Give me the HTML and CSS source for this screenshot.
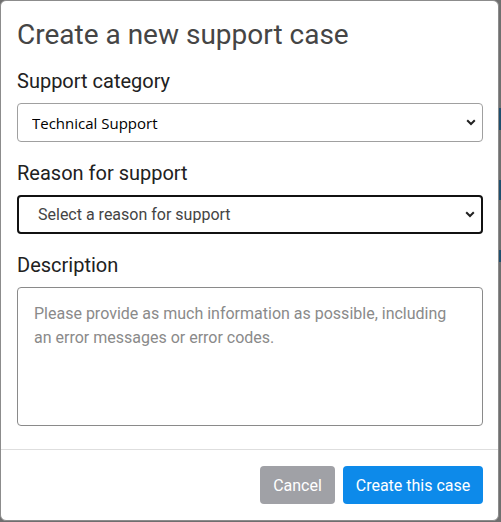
FILE: index.html
```html
<!DOCTYPE html>
<html lang="en">
<head>
<meta charset="utf-8">
<title>Create a new support case</title>
<link rel="stylesheet" href="styles.css">
</head>
<body>
<div class="modal">
  <div class="modal-body">
    <h1 class="title">Create a new support case</h1>
    <label class="label" for="cat">Support category</label>
    <select id="cat" class="select select-native">
      <option>Technical Support</option>
    </select>
    <label class="label" for="reason">Reason for support</label>
    <select id="reason" class="select select-focus">
      <option>Select a reason for support</option>
    </select>
    <label class="label" for="desc">Description</label>
    <textarea id="desc" class="textarea" placeholder="Please provide as much information as possible, including an error messages or error codes."></textarea>
  </div>
  <div class="modal-footer">
    <button class="btn btn-secondary">Cancel</button>
    <button class="btn btn-primary">Create this case</button>
  </div>
</div>
</body>
</html>
```
FILE: styles.css
```css
html, body {
  margin: 0;
  padding: 0;
}
body {
  width: 501px;
  height: 522px;
  overflow: hidden;
  font-family: Roboto, "Liberation Sans", sans-serif;
  background:
    linear-gradient(to bottom,
      #6f6f6f 0, #6f6f6f 108px,
      #1f4e6e 108px, #1f4e6e 130px,
      #6f6f6f 130px, #6f6f6f 180px,
      #1f4e6e 180px, #1f4e6e 200px,
      #6f6f6f 200px, #6f6f6f 250px,
      #1f4e6e 250px, #1f4e6e 262px,
      #6f6f6f 262px);
}
.modal {
  width: 499px;
  height: 521px;
  box-sizing: border-box;
  background: #fff;
  border: 1px solid #8c8c8c;
  border-radius: 6px;
  display: flex;
  flex-direction: column;
}
.modal-body {
  padding: 17px 15px 23px 16px;
  display: flex;
  flex-direction: column;
  border-bottom: 1px solid #dedede;
}
.title {
  margin: 0 0 14px 0;
  font-size: 28px;
  font-weight: 400;
  line-height: 34px;
  color: #454545;
}
.label {
  font-size: 20px;
  line-height: 30px;
  color: #212121;
  margin-bottom: 7px;
}
.select {
  appearance: none;
  -webkit-appearance: none;
  box-sizing: border-box;
  width: 100%;
  height: 39px;
  background-color: #fff;
  background-image: url("data:image/svg+xml,%3Csvg xmlns='http://www.w3.org/2000/svg' width='10' height='7' viewBox='0 0 10 7'%3E%3Cpath d='M1.2 1.3 L5 5 L8.8 1.3' fill='none' stroke='%23222' stroke-width='2'/%3E%3C/svg%3E");
  background-repeat: no-repeat;
  background-position: right 6px center;
  border-radius: 4px;
  margin-bottom: 16px;
  outline: none;
}
.select-native {
  border: 1px solid #a0a0a0;
  padding: 0 24px 0 14px;
  font-family: "Open Sans", "Noto Sans", sans-serif;
  font-size: 15px;
  color: #000;
}
.select-focus {
  border: 2px solid #111;
  padding: 0 24px 0 19px;
  font-family: Roboto, sans-serif;
  font-size: 16px;
  color: #444;
}
.textarea {
  box-sizing: border-box;
  width: 100%;
  height: 139px;
  border: 1px solid #8a8a8a;
  border-radius: 4px;
  padding: 14px 16px;
  font-family: Roboto, sans-serif;
  font-size: 16px;
  line-height: 24px;
  color: #333;
  resize: none;
  outline: none;
}
.textarea::placeholder {
  color: #8a8a8a;
}
.modal-footer {
  display: flex;
  justify-content: flex-end;
  gap: 8px;
  padding: 16px 15px 0 16px;
}
.btn {
  height: 38px;
  border: none;
  border-radius: 4px;
  padding: 0 12px;
  font-family: Roboto, sans-serif;
  font-size: 16px;
  color: #fff;
}
.btn-secondary {
  background: #a0a1a6;
  min-width: 75px;
}
.btn-primary {
  background: #0d8aea;
  min-width: 140px;
}
```
